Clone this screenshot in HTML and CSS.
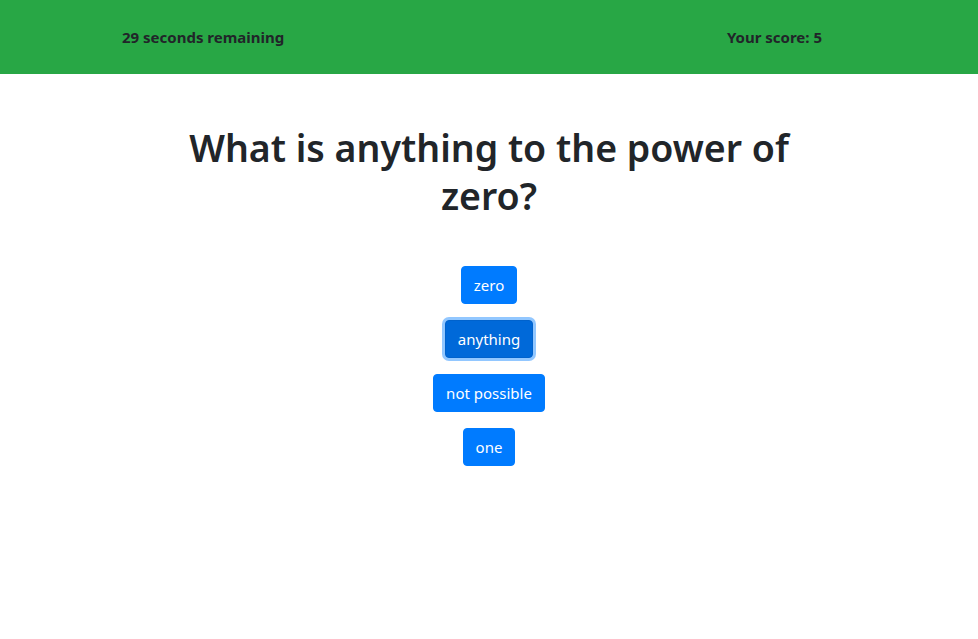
FILE: index.html
```html
<!DOCTYPE html>
<html lang="en">
<head>
<meta charset="utf-8">
<title>Quiz</title>
<link rel="stylesheet" href="styles.css">
</head>
<body>
<header class="topbar">
  <span class="timer">29 seconds remaining</span>
  <span class="score">Your score: 5</span>
</header>
<main class="quiz">
  <h1 class="question">What is anything to the power of<br>zero?</h1>
  <div class="answers">
    <button class="btn">zero</button>
    <button class="btn btn-focus">anything</button>
    <button class="btn">not possible</button>
    <button class="btn">one</button>
  </div>
</main>
</body>
</html>
```
FILE: styles.css
```css
* { box-sizing: border-box; }
html, body {
  margin: 0;
  padding: 0;
  background: #fff;
  color: #212529;
  font-family: "Noto Sans", "Open Sans", sans-serif;
}
.topbar {
  background: #28a745;
  height: 74px;
  display: flex;
  align-items: center;
  justify-content: space-between;
  padding: 0 156px 0 122px;
  font-weight: 700;
  font-size: 15px;
  color: #212529;
}
.quiz {
  text-align: center;
}
.question {
  margin: 50px 0 46px;
  font-size: 37.5px;
  font-weight: 600;
  line-height: 48px;
}
.answers {
  display: flex;
  flex-direction: column;
  align-items: center;
  gap: 16px;
}
.btn {
  font-family: inherit;
  font-size: 15px;
  line-height: 24px;
  padding: 6px 12px;
  height: 38px;
  border: 1px solid #007bff;
  border-radius: 4px;
  background: #007bff;
  color: #fff;
}
.btn-focus {
  background: #0069d9;
  border-color: #0062cc;
  box-shadow: 0 0 0 3px rgba(38, 143, 255, 0.5);
}
```
